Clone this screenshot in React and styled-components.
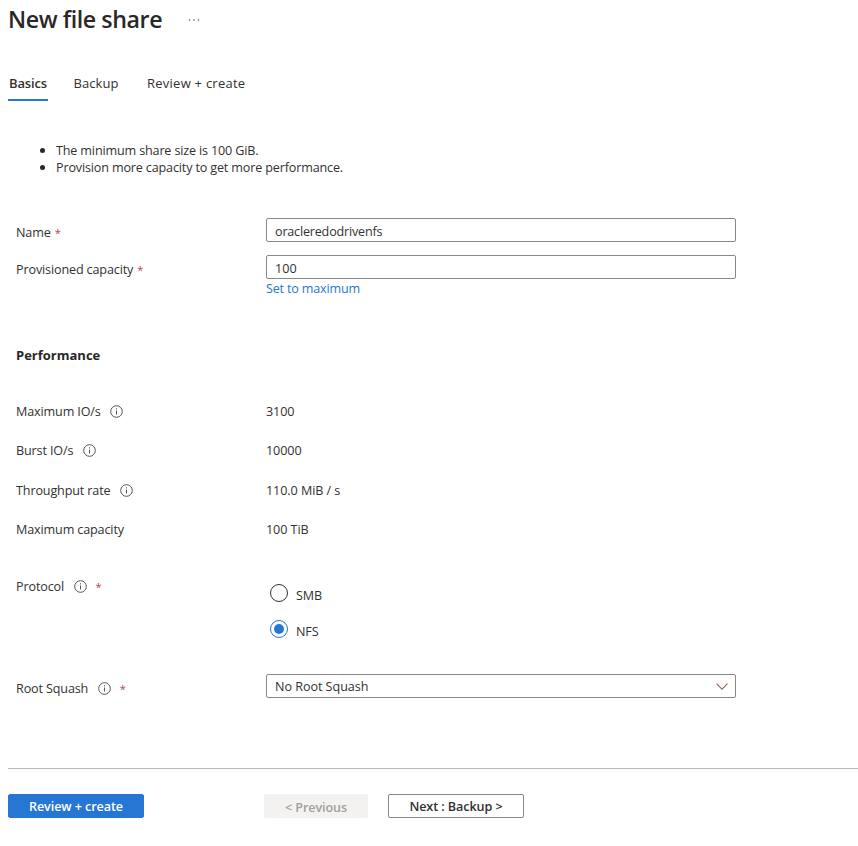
import React, { useState } from 'react';
import styled, { createGlobalStyle } from 'styled-components';

const GlobalStyle = createGlobalStyle`
  * { box-sizing: border-box; }
  body {
    margin: 0;
    background: #fff;
    color: #323130;
    font: 400 12.6px/18px "Open Sans", "Noto Sans", sans-serif;
    letter-spacing: -0.14px;
    overflow: hidden;
  }
  button, input {
    font: inherit;
    letter-spacing: inherit;
    color: inherit;
  }
`;

const Page = styled.main`
  width: 858px;
  height: 846px;
  display: flex;
  flex-direction: column;
`;

const Header = styled.header`
  display: flex;
  align-items: flex-start;
  gap: 26px;
  height: 74px;
  padding: 3px 0 0 8px;
`;

const Title = styled.h1`
  margin: 0;
  font-size: 23.2px;
  font-weight: 600;
  line-height: 32px;
  letter-spacing: -0.42px;
  color: #292827;
`;

const MoreIcon = styled.svg`
  width: 13px;
  height: 4px;
  margin-top: 15px;
  fill: #605e5c;
`;

const Tabs = styled.nav`
  display: flex;
  align-items: flex-start;
  height: 64px;
  padding-left: 8px;
`;

const Tab = styled.button`
  height: 27px;
  margin-right: ${(p) => p.$after || 0}px;
  padding: 0 1px 9px;
  border: 0;
  border-bottom: 2px solid ${(p) => (p.$active ? '#2577d3' : 'transparent')};
  background: none;
  font-size: 13px;
  line-height: 18px;
  font-weight: ${(p) => (p.$active ? 600 : 400)};
  letter-spacing: ${(p) => p.$spacing || '0'};
  white-space: nowrap;
`;

const Notes = styled.ul`
  margin: 0;
  padding: 4px 0 0 40px;
  height: 80px;
  list-style: none;
  line-height: 17px;
  letter-spacing: -0.16px;
`;

const Note = styled.li`
  display: flex;
  align-items: center;
  gap: 11px;

  &::before {
    content: '';
    width: 5px;
    height: 5px;
    border-radius: 50%;
    background: #292827;
  }
`;

const Row = styled.div`
  display: grid;
  grid-template-columns: 250px 470px;
  align-items: start;
  height: ${(p) => p.$height}px;
  padding-left: 16px;
`;

const Label = styled.div`
  display: flex;
  align-items: center;
  height: 18px;
  margin-top: ${(p) => p.$top || 1}px;
`;

const Star = styled.span`
  margin-left: ${(p) => p.$gap || 4}px;
  color: #b0444a;
  font-size: 11px;
`;

const InfoSvg = styled.svg`
  width: 13px;
  height: 13px;
  margin: 0 0 2px 9.5px;
  fill: none;
  stroke: #55524f;
`;

const Field = styled.input`
  display: block;
  width: 470px;
  height: 24px;
  padding: 2px 8px 0;
  border: 1px solid #8a8886;
  border-radius: 2px;
  background: #fff;
  outline: 0;
  letter-spacing: ${(p) => p.$spacing || '0'};
`;

const Link = styled.a`
  display: block;
  width: max-content;
  padding-top: 1px;
  color: #2577d3;
  letter-spacing: -0.19px;
`;

const SectionTitle = styled.h2`
  height: 56px;
  margin: 0;
  padding-left: 16px;
  font-size: 13px;
  line-height: 18px;
  font-weight: 700;
  letter-spacing: 0;
  color: #292827;
`;

const Value = styled.div`
  padding-top: 1px;
  letter-spacing: -0.08px;
`;

const RadioGroup = styled.div`
  display: flex;
  flex-direction: column;
  gap: 18px;
  padding: 7px 0 0 4px;
`;

const Radio = styled.button`
  display: flex;
  align-items: flex-start;
  gap: 8px;
  height: 18px;
  padding: 0;
  border: 0;
  background: none;
`;

const RadioMark = styled.span`
  display: grid;
  place-items: center;
  width: 18px;
  height: 18px;
  border: 1px solid ${(p) => (p.$checked ? '#2577d3' : '#323130')};
  border-radius: 50%;

  &::after {
    content: '';
    width: 10px;
    height: 10px;
    border-radius: 50%;
    background: ${(p) => (p.$checked ? '#2577d3' : 'transparent')};
  }
`;

const RadioText = styled.span`
  padding-top: 3px;
`;

const Select = styled.button`
  display: flex;
  align-items: center;
  justify-content: space-between;
  width: 470px;
  height: 24px;
  padding: 2px 7px 0 8px;
  border: 1px solid #8a8886;
  border-radius: 2px;
  background: #fff;
  letter-spacing: -0.05px;
`;

const ChevronSvg = styled.svg`
  width: 12px;
  height: 7px;
  margin-bottom: 1px;
  fill: none;
  stroke: #96694f;
  stroke-width: 1.1;
`;

const Footer = styled.footer`
  display: flex;
  align-items: flex-start;
  margin-left: 8px;
  padding-top: 25px;
  border-top: 1px solid #bbb9b7;
`;

const Button = styled.button`
  width: ${(p) => p.$width}px;
  height: 24px;
  margin-right: ${(p) => p.$after || 0}px;
  padding: ${(p) => (p.disabled ? 4 : 2)}px 0 0;
  border: 1px solid ${(p) => (p.$primary ? '#2577d3' : p.disabled ? '#f3f2f1' : '#8a8886')};
  border-radius: 2px;
  background: ${(p) => (p.$primary ? '#2577d3' : p.disabled ? '#f3f2f1' : '#fff')};
  color: ${(p) => (p.$primary ? '#fff' : p.disabled ? '#a19f9d' : '#323130')};
  font-weight: 600;
  letter-spacing: -0.08px;
`;

const Info = () => (
  <InfoSvg viewBox="0 0 13 13" aria-label="Info">
    <circle cx="6.5" cy="6.5" r="5.8" />
    <path d="M6.5 5.5v4M6.5 3.3v1.1" />
  </InfoSvg>
);

const METRICS = [
  { label: 'Maximum IO/s', value: '3100', info: true, height: 39 },
  { label: 'Burst IO/s', value: '10000', info: true, height: 40 },
  { label: 'Throughput rate', value: '110.0 MiB / s', info: true, height: 39 },
  { label: 'Maximum capacity', value: '100 TiB', info: false, height: 57 },
];

export default function App() {
  const [protocol, setProtocol] = useState('NFS');
  return (
    <>
      <GlobalStyle />
      <Page>
        <Header>
          <Title>New file share</Title>
          <MoreIcon viewBox="0 0 13 4">
            <circle cx="1.5" cy="2" r="0.8" />
            <circle cx="6" cy="2" r="0.8" />
            <circle cx="10.5" cy="2" r="0.8" />
          </MoreIcon>
        </Header>
        <Tabs>
          <Tab $active $spacing="-0.13px" $after={24.5}>Basics</Tab>
          <Tab $spacing="0.05px" $after={26.5}>Backup</Tab>
          <Tab $spacing="0.25px">Review + create</Tab>
        </Tabs>
        <Notes>
          <Note>The minimum share size is 100 GiB.</Note>
          <Note>Provision more capacity to get more performance.</Note>
        </Notes>
        <Row $height={37}>
          <Label $top={6}>Name<Star>*</Star></Label>
          <Field $spacing="-0.2px" defaultValue="oracleredodrivenfs" />
        </Row>
        <Row $height={91}>
          <Label $top={6}>Provisioned capacity<Star>*</Star></Label>
          <div>
            <Field defaultValue="100" />
            <Link>Set to maximum</Link>
          </div>
        </Row>
        <SectionTitle>Performance</SectionTitle>
        {METRICS.map((m) => (
          <Row key={m.label} $height={m.height}>
            <Label>{m.label}{m.info && <Info />}</Label>
            <Value>{m.value}</Value>
          </Row>
        ))}
        <Row $height={97}>
          <Label>Protocol<Info /><Star $gap={9}>*</Star></Label>
          <RadioGroup>
            {['SMB', 'NFS'].map((name) => (
              <Radio key={name} onClick={() => setProtocol(name)}>
                <RadioMark $checked={protocol === name} />
                <RadioText>{name}</RadioText>
              </Radio>
            ))}
          </RadioGroup>
        </Row>
        <Row $height={94}>
          <Label $top={6}>Root Squash<Info /><Star $gap={9}>*</Star></Label>
          <Select>
            No Root Squash
            <ChevronSvg viewBox="0 0 12 7">
              <path d="M0.5 0.7L6 6.2L11.5 0.7" />
            </ChevronSvg>
          </Select>
        </Row>
        <Footer>
          <Button $primary $width={136} $after={120}>Review + create</Button>
          <Button disabled $width={104} $after={20}>&lt; Previous</Button>
          <Button $width={136}>Next : Backup &gt;</Button>
        </Footer>
      </Page>
    </>
  );
}
